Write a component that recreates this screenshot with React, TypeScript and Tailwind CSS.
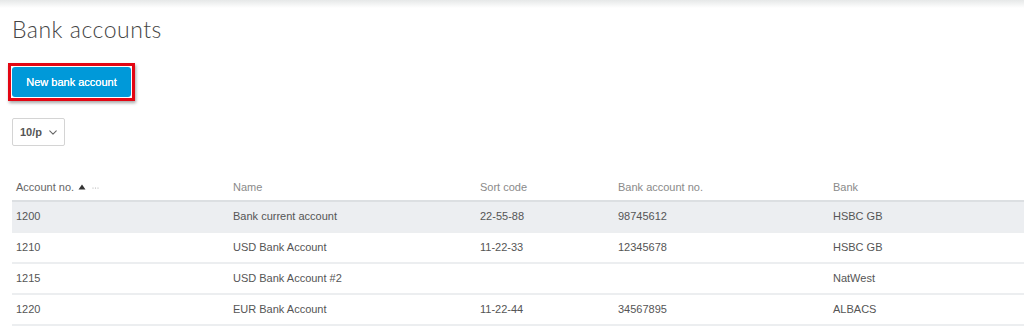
import { ChevronDown } from "lucide-react";

const rows = [
  { no: "1200", name: "Bank current account", sort: "22-55-88", acc: "98745612", bank: "HSBC GB" },
  { no: "1210", name: "USD Bank Account", sort: "11-22-33", acc: "12345678", bank: "HSBC GB" },
  { no: "1215", name: "USD Bank Account #2", sort: "", acc: "", bank: "NatWest" },
  { no: "1220", name: "EUR Bank Account", sort: "11-22-44", acc: "34567895", bank: "ALBACS" },
];

const cols = "grid grid-cols-[217px_247px_138px_215px_1fr]";

export default function App() {
  return (
    <div className="h-[327px] w-[1024px] overflow-hidden bg-white font-['Liberation_Sans',Arial,sans-serif]">
      {/* top shadow */}
      <div className="h-[8px] bg-gradient-to-b from-[#e6e8e8] to-white" />

      <div className="pl-[12px]">
        <h1 className="mt-[7px] font-['Lato',sans-serif] text-[23px] font-light leading-[29px] tracking-[0.5px] text-[#444]">
          Bank accounts
        </h1>

        {/* highlighted button */}
        <div className="mt-[19px] ml-[-4px] inline-block border-[3px] border-[#e30613] p-px shadow-[1px_2px_3px_rgba(0,0,0,0.35)]">
          <button className="block h-[30px] w-[119px] rounded-[3px] bg-[#0099d9] text-[11px] font-medium text-white [text-shadow:0_0_0.4px_#fff]">
            New bank account
          </button>
        </div>

        {/* page size select */}
        <div className="mt-[17px] flex h-[28px] w-[53px] items-center justify-between rounded-[2px] border border-[#d4d4d4] pr-[4px] pl-[7px] text-[11px] font-bold text-[#555]">
          <span>10/p</span>
          <ChevronDown className="h-[13px] w-[14px] text-[#666]" strokeWidth={2} />
        </div>

        {/* table */}
        <div className="mt-[28px] text-[11px]">
          <div className={`${cols} h-[28px] items-center border-b-2 border-[#dcdfe2] text-[#8a8a8a]`}>
            <div className="flex items-center pl-[4px] text-[#666]">
              <span>Account no.</span>
              <svg className="ml-[4px]" width="8" height="6" viewBox="0 0 8 6">
                <path d="M4 0.5 L7.5 5.5 L0.5 5.5 Z" fill="#333" />
              </svg>
              <svg className="ml-[6px]" width="7" height="6" viewBox="0 0 7 6">
                <circle cx="1" cy="4" r="0.6" fill="#aaa" />
                <circle cx="3.5" cy="4" r="0.6" fill="#aaa" />
                <circle cx="6" cy="4" r="0.6" fill="#aaa" />
              </svg>
            </div>
            <div className="pl-[4px]">Name</div>
            <div className="pl-[4px]">Sort code</div>
            <div className="pl-[4px]">Bank account no.</div>
            <div className="pl-[4px]">Bank</div>
          </div>
          {rows.map((r, i) => (
            <div
              key={r.no}
              className={`${cols} h-[31px] items-center border-b-2 border-[#eceef0] text-[#555] ${i === 0 ? "bg-[#eceef1]" : ""}`}
            >
              <div className="pl-[4px]">{r.no}</div>
              <div className="pl-[4px]">{r.name}</div>
              <div className="pl-[4px]">{r.sort}</div>
              <div className="pl-[4px]">{r.acc}</div>
              <div className="pl-[4px]">{r.bank}</div>
            </div>
          ))}
        </div>
      </div>
    </div>
  );
}
